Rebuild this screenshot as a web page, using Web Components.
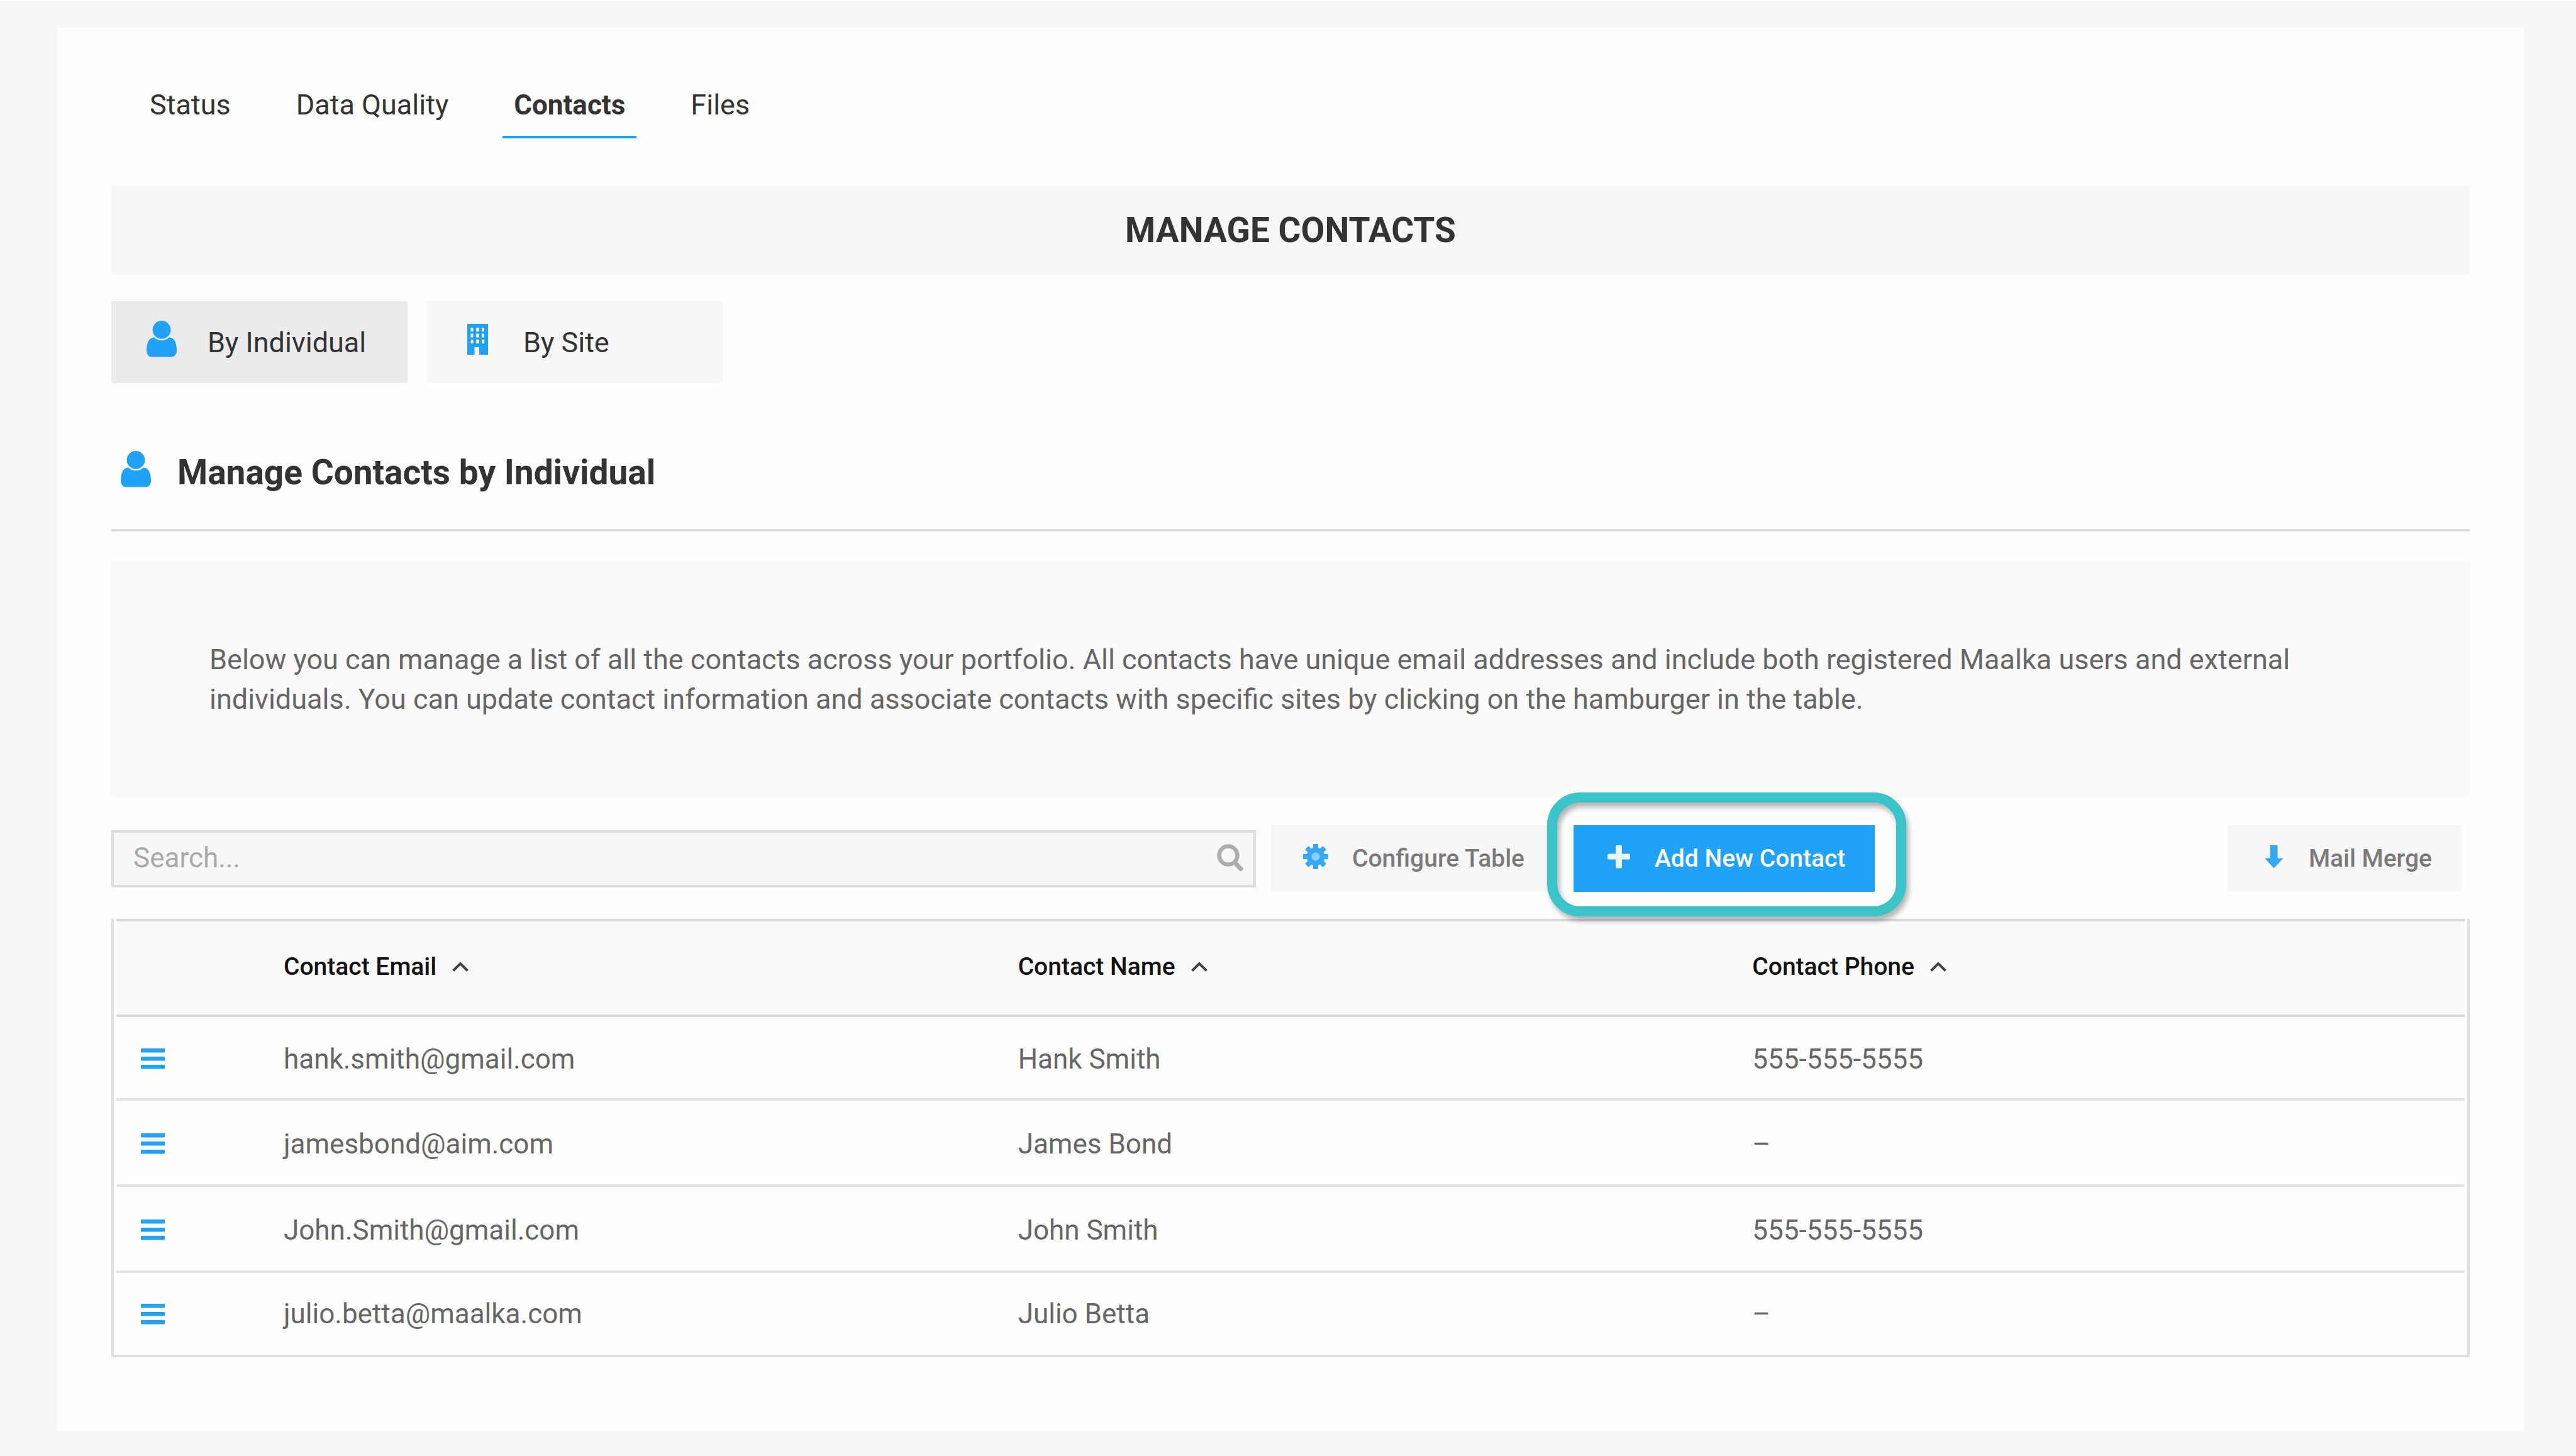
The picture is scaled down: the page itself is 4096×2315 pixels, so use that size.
<!DOCTYPE html>
<html lang="en">
<head>
<meta charset="utf-8">
<title>Manage Contacts</title>
<style>
  html { background: #f7f7f7; }
  body { margin: 0; font-family: Roboto, "Liberation Sans", sans-serif; font-size: 45px; color: #333; }
</style>
</head>
<body>
<contacts-page></contacts-page>

<script>
const define = (name, html, setup) => {
  const template = document.createElement('template');
  template.innerHTML = html;
  customElements.define(name, class extends HTMLElement {
    constructor() {
      super();
      this.attachShadow({ mode: 'open' }).append(template.content.cloneNode(true));
    }
    connectedCallback() { if (setup) setup(this, this.shadowRoot); }
  });
};

const teeth = [0, 45, 90, 135].map(a =>
  `<rect x="16" y="0" width="8" height="40" rx="1" transform="rotate(${a} 20 20)"/>`).join('');

const ICONS = {
  user: ['256 128 1280 1832', '<path d="M1536 1399q0 109-62.5 187t-150.5 78h-854q-88 0-150.5-78t-62.5-187q0-85 8.5-160.5t31.5-152 58.5-131 94-89 134.5-34.5q131 128 313 128t313-128q76 0 134.5 34.5t94 89 58.5 131 31.5 152 8.5 160.5zm-256-887q0 159-112.5 271.5t-271.5 112.5-271.5-112.5-112.5-271.5 112.5-271.5 271.5-112.5 271.5 112.5 112.5 271.5z"/>'],
  building: ['-8 -5 48 69', '<path fill-rule="evenodd" d="M0 0h33v49h-14v-12h-7.500v12H0zM5.500 6v6h4v-6zM14 6v6h5v-6zM23 6v6h4v-6zM5.500 15.500v6h4v-6zM14 15.500v6h5v-6zM23 15.500v6h4v-6zM5.500 25v6h4v-6zM14 25v6h5v-6zM23 25v6h4v-6z"/>'],
  gear: ['0 0 42 46', `<mask id="hole"><rect width="40" height="40" fill="#fff"/><circle cx="20" cy="20" r="6.500"/></mask><g mask="url(#hole)"><circle cx="20" cy="20" r="14.500"/>${teeth}</g>`],
  plus: ['-3 -2 42 46', '<path d="M15 0h6q2 0 2 2v11.500h11q2 0 2 2v5q0 2-2 2h-11V34.500q0 2-2 2h-6q-2 0-2-2V22.500H2q-2 0-2-2v-5q0-2 2-2h11V2q0-2 2-2z"/>'],
  down: ['-8 -2 42 46', '<path d="M8.500 0h12v20.500h9L14.500 36.500 0 20.500h8.500z"/>'],
  search: ['0 0 42 44', '<g fill="none" stroke="currentColor"><circle cx="18" cy="18" r="14.500" stroke-width="6.500"/><path d="M29 30l9 9.500" stroke-width="7" stroke-linecap="round"/></g>'],
  bars: ['0 0 38 33', '<rect width="38" height="6.500" rx="1"/><rect y="13" width="38" height="6.500" rx="1"/><rect y="26" width="38" height="6.500" rx="1"/>'],
  caret: ['0 0 28 18', '<path d="M2.500 15.500L14 4l11.500 11.500" fill="none" stroke="currentColor" stroke-width="4"/>'],
};

define('ui-icon', `
  <style>
    :host { display: block; flex: none; width: 48px; color: #1fa2f7; }
    svg { display: block; width: 100%; height: auto; fill: currentColor; }
  </style>
  <svg aria-hidden="true"></svg>`, (host, root) => {
  const [box, art] = ICONS[host.getAttribute('name')];
  const svg = root.querySelector('svg');
  svg.setAttribute('viewBox', box);
  svg.innerHTML = art;
});

define('nav-tab', `
  <style>
    :host { display: block; }
    a { display: block; padding: 0 18px 19px; border-bottom: 4px solid transparent;
        line-height: 60px; color: inherit; text-decoration: none; }
    :host([active]) a { font-size: 44px; font-weight: 700; border-color: #1fa2f7; }
  </style>
  <a href="#"><slot></slot></a>`);

define('nav-tabs', `
  <style>
    :host { display: block; }
    nav { display: flex; gap: 68px; padding-left: 43px; }
  </style>
  <nav><slot></slot></nav>`);

define('page-banner', `
  <style>
    :host { display: block; background: #f7f7f7; border-radius: 3px; }
    h1 { margin: 0; font-size: 55px; line-height: 141px; font-weight: 700; text-align: center; text-transform: uppercase; }
  </style>
  <h1><slot></slot></h1>`);

define('view-choice', `
  <style>
    :host { display: block; width: 471px; }
    button { display: flex; align-items: center; gap: 49px; width: 100%; height: 130px; padding: 0 0 0 56px;
             border: 0; border-radius: 3px; background: #f7f7f7; font: inherit; color: inherit; text-align: left; }
    :host([active]) button { background: #ebebeb; }
  </style>
  <button type="button"><slot name="icon"></slot><span><slot></slot></span></button>`);

define('section-heading', `
  <style>
    :host { display: flex; align-items: center; gap: 42px; padding: 0 15px 55px; border-bottom: 4px solid #ddd; }
    h2 { margin: 0; font-size: 55px; line-height: 70px; font-weight: 700; }
  </style>
  <slot name="icon"></slot><h2><slot></slot></h2>`);

define('info-note', `
  <style>
    :host { display: block; padding: 126px 156px 125px; background: #fafafa; color: #666; }
    p { margin: 0; line-height: 63px; }
  </style>
  <p><slot></slot></p>`);

define('search-box', `
  <style>
    :host { display: block; }
    label { display: flex; align-items: center; height: 91px; box-sizing: border-box; padding: 0 16px 2px 31px;
            border: 4px solid #ddd; background: #f7f7f7; }
    input { flex: 1; min-width: 0; padding: 0; border: 0; outline: 0; background: none; font: inherit; font-size: 44px; color: #333; }
    input::placeholder { color: #aaa; opacity: 1; }
    ui-icon { width: 42px; color: #adadad; }
  </style>
  <label><input type="text" placeholder="Search..." aria-label="Search contacts"><ui-icon name="search"></ui-icon></label>`);

define('tool-button', `
  <style>
    :host { display: block; }
    button { display: flex; align-items: center; gap: 36px; height: 106px; padding: 0 47px 0 51px; border: 0;
             background: #f7f7f7; color: #7a7a7a; font: inherit; font-size: 39px; font-weight: 500; white-space: nowrap; }
    ::slotted(ui-icon) { width: 42px; opacity: .9; }
    :host([primary]) button { background: #1fa2f7; color: #fff; }
    :host([primary]) ::slotted(ui-icon) { color: #fff; }
  </style>
  <button type="button"><slot name="icon"></slot><span><slot></slot></span></button>`);

define('call-out', `
  <style>
    :host { display: block; position: relative; }
    i { position: absolute; inset: -52px -50px -39px -42px; z-index: 1; box-sizing: border-box; pointer-events: none;
        border: 16px solid #3ac3c9; border-radius: 52px; filter: drop-shadow(4px 7px 4px rgba(0, 0, 0, .3)); }
  </style>
  <slot></slot><i></i>`);

define('contact-table', `
  <style>
    :host { display: block; border: solid #ddd; border-width: 0 4px 4px; padding: 0 4px; }
    table { width: 100%; table-layout: fixed; border-collapse: separate; border-spacing: 0; }
    th, td { box-sizing: border-box; padding: 0 0 0 35px; text-align: left; font-size: 44px; font-weight: 400; color: #666; }
    th { height: 156px; padding-bottom: 4px; background: #fafafa; border: solid #dadada; border-width: 4px 0; }
    td { height: 137px; padding-top: 4px; border-bottom: 4px solid #e4e4e4; }
    tbody tr:first-child td { height: 133px; }
    tbody tr:last-child td { height: 130px; border: 0; padding-top: 0; }
    .menu { width: 231px; padding-left: 39px; }
    button { display: flex; align-items: center; gap: 24px; padding: 0; border: 0; background: none; font: inherit; color: inherit; }
    th button { font-size: 39px; font-weight: 500; color: #111; }
    th ui-icon { width: 28px; color: #444; }
    .menu ui-icon { width: 38px; }
  </style>
  <table>
    <thead><tr><th class="menu" aria-label="Actions"></th></tr></thead>
    <tbody></tbody>
  </table>`, (host, root) => {
  const columns = ['Contact Email', 'Contact Name', 'Contact Phone'];
  const rows = [
    ['hank.smith@gmail.com', 'Hank Smith', '555-555-5555'],
    ['jamesbond@aim.com', 'James Bond', '–'],
    ['John.Smith@gmail.com', 'John Smith', '555-555-5555'],
    ['julio.betta@maalka.com', 'Julio Betta', '–'],
  ];
  root.querySelector('thead tr').insertAdjacentHTML('beforeend', columns.map(c =>
    `<th scope="col"><button type="button">${c}<ui-icon name="caret"></ui-icon></button></th>`).join(''));
  root.querySelector('tbody').innerHTML = rows.map(r =>
    `<tr><td class="menu"><button type="button" aria-label="Edit ${r[1]}"><ui-icon name="bars"></ui-icon></button></td>${
      r.map(v => `<td>${v}</td>`).join('')}</tr>`).join('');
});

define('contacts-page', `
  <style>
    :host { display: block; padding: 43px 83px 39px 91px; border-top: 1px solid #fff; }
    main { padding: 93px 86px 117px; background: #fefefe; }
    page-banner { margin-top: 76px; }
    .views { display: flex; gap: 31px; margin-top: 42px; }
    section-heading { margin-top: 107px; }
    info-note { margin-top: 46px; }
    .tools { display: flex; align-items: center; margin: 44px 13px 43px 0; }
    search-box { flex: 1 1 0; max-width: 1820px; margin-right: 24px; }
    call-out { margin-left: 31px; }
    .end { margin-left: auto; }
  </style>
  <main>
    <nav-tabs>
      <nav-tab>Status</nav-tab>
      <nav-tab>Data Quality</nav-tab>
      <nav-tab active>Contacts</nav-tab>
      <nav-tab>Files</nav-tab>
    </nav-tabs>
    <page-banner>Manage Contacts</page-banner>
    <div class="views">
      <view-choice active><ui-icon slot="icon" name="user"></ui-icon>By Individual</view-choice>
      <view-choice><ui-icon slot="icon" name="building"></ui-icon>By Site</view-choice>
    </div>
    <section-heading><ui-icon slot="icon" name="user"></ui-icon>Manage Contacts by Individual</section-heading>
    <info-note>Below you can manage a list of all the contacts across your portfolio. All contacts have unique email addresses and include both registered Maalka users and external individuals. You can update contact information and associate contacts with specific sites by clicking on the hamburger in the table.</info-note>
    <div class="tools">
      <search-box></search-box>
      <tool-button><ui-icon slot="icon" name="gear"></ui-icon>Configure Table</tool-button>
      <call-out><tool-button primary><ui-icon slot="icon" name="plus"></ui-icon>Add New Contact</tool-button></call-out>
      <tool-button class="end"><ui-icon slot="icon" name="down"></ui-icon>Mail Merge</tool-button>
    </div>
    <contact-table></contact-table>
  </main>`);
</script>
</body>
</html>
